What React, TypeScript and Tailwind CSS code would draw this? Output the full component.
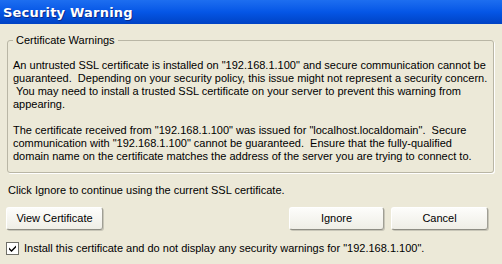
import React from "react";

const font = { fontFamily: '"Liberation Sans", Arial, sans-serif' };

function Btn({ children, w }: { children: React.ReactNode; w: string }) {
  return (
    <button
      className={`${w} h-[23px] rounded-[3px] border border-t-white border-l-white border-r-[#a09f95] border-b-[#8e8d84] bg-gradient-to-b from-[#fdfdfb] to-[#efeee6] text-[11px] text-black shadow-[1px_1px_0_#c8c6b8]`}
    >
      {children}
    </button>
  );
}

export default function App() {
  return (
    <div className="w-[502px] h-[264px] bg-[#ece9d8] flex flex-col text-[11px] leading-[13px] text-black overflow-hidden" style={font}>
      <div className="h-[24px] shrink-0 flex items-center pl-[3px] bg-gradient-to-b from-[#1d6ef0] via-[#0556e6] to-[#0042c4]">
        <span className="text-white font-bold text-[13px] tracking-[0.2px]" style={{ fontFamily: '"DejaVu Sans", sans-serif', textShadow: "1px 1px 0 #0a2a8a" }}>
          Security Warning
        </span>
      </div>
      <div className="px-[7px] pt-[16px] flex flex-col">
        <div className="relative w-[487px] h-[133px] border border-[#b9b6a5] rounded-[3px] pl-[5px] pt-[18px] whitespace-nowrap shadow-[1px_1px_0_#ffffff]">
          <span className="absolute -top-[7px] left-[5px] px-[3px] bg-[#ece9d8]">Certificate Warnings</span>
          <p>
            An untrusted SSL certificate is installed on "192.168.1.100" and secure communication cannot be
            <br />
            guaranteed.&nbsp; Depending on your security policy, this issue might not represent a security concern.
            <br />
            &nbsp;You may need to install a trusted SSL certificate on your server to prevent this warning from
            <br />
            appearing.
          </p>
          <p className="mt-[13px]">
            The certificate received from "192.168.1.100" was issued for "localhost.localdomain".&nbsp; Secure
            <br />
            communication with "192.168.1.100" cannot be guaranteed.&nbsp; Ensure that the fully-qualified
            <br />
            domain name on the certificate matches the address of the server you are trying to connect to.
          </p>
        </div>
        <div className="mt-[11px] pl-[1px]">Click Ignore to continue using the current SSL certificate.</div>
        <div className="mt-[10px] flex items-center -ml-[1px]">
          <Btn w="w-[97px]">View Certificate</Btn>
          <div className="flex-1" />
          <Btn w="w-[95px]">Ignore</Btn>
          <div className="w-[7px]" />
          <Btn w="w-[97px]">Cancel</Btn>
          <div className="w-[7px]" />
        </div>
        <div className="mt-[12px] flex items-center -ml-[1px]">
          <div className="w-[13px] h-[13px] border border-[#6f6f68] bg-white flex items-center justify-center">
            <svg width="9" height="9" viewBox="0 0 9 9">
              <path d="M1 3.5 L3.5 6 L8 1.5 L8 3.5 L3.5 8 L1 5.5 Z" fill="#000" />
            </svg>
          </div>
          <span className="ml-[5px]">Install this certificate and do not display any security warnings for "192.168.1.100".</span>
        </div>
      </div>
    </div>
  );
}
